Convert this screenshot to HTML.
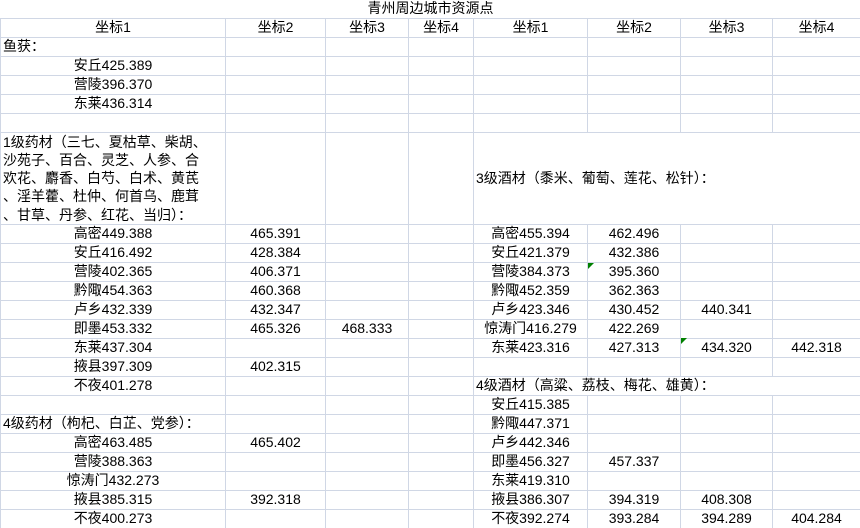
<!DOCTYPE html>
<html><head><meta charset="utf-8"><style>
html,body{margin:0;padding:0;background:#fff;width:860px;height:528px;overflow:hidden}
table{border-collapse:collapse;table-layout:fixed;width:860px;font-family:"Liberation Sans","Noto Sans CJK SC",sans-serif;font-size:14px;color:#000}
td{border:1px solid #d0d7e5;padding:0;line-height:17px;text-align:center;white-space:nowrap;overflow:hidden;vertical-align:middle}
tr{height:19px}
td.l{text-align:left;padding-left:2px}
.t td{border:none;border-bottom:1px solid #d0d7e5}
td.n{color:#000}
.tri{position:absolute;width:0;height:0;border-top:6px solid #008000;border-right:6px solid transparent}
</style></head><body>
<table>
<colgroup><col style="width:225px"><col style="width:100px"><col style="width:83px"><col style="width:65px"><col style="width:114px"><col style="width:93px"><col style="width:92px"><col style="width:88px"></colgroup>
<tr class="t" style="height:18px"><td colspan="8">青州周边城市资源点</td></tr>
<tr><td>坐标1</td><td>坐标2</td><td>坐标3</td><td>坐标4</td><td>坐标1</td><td>坐标2</td><td>坐标3</td><td>坐标4</td></tr>
<tr><td class="l">鱼获：</td><td></td><td></td><td></td><td></td><td></td><td></td><td></td></tr>
<tr><td>安丘425.389</td><td></td><td></td><td></td><td></td><td></td><td></td><td></td></tr>
<tr><td>营陵396.370</td><td></td><td></td><td></td><td></td><td></td><td></td><td></td></tr>
<tr><td>东莱436.314</td><td></td><td></td><td></td><td></td><td></td><td></td><td></td></tr>
<tr><td></td><td></td><td></td><td></td><td></td><td></td><td></td><td></td></tr>
<tr style="height:91px"><td class="l" style="line-height:18.3px">1级药材（三七、夏枯草、柴胡、<br>沙苑子、百合、灵芝、人参、合<br>欢花、麝香、白芍、白术、黄芪<br>、淫羊藿、杜仲、何首乌、鹿茸<br>、甘草、丹参、红花、当归）：</td><td></td><td></td><td></td><td colspan="4" class="l">3级酒材（黍米、葡萄、莲花、松针）：</td></tr>
<tr><td>高密449.388</td><td>465.391</td><td></td><td></td><td>高密455.394</td><td>462.496</td><td></td><td></td></tr>
<tr><td>安丘416.492</td><td>428.384</td><td></td><td></td><td>安丘421.379</td><td>432.386</td><td></td><td></td></tr>
<tr><td>营陵402.365</td><td>406.371</td><td></td><td></td><td>营陵384.373</td><td>395.360</td><td></td><td></td></tr>
<tr><td>黔陬454.363</td><td>460.368</td><td></td><td></td><td>黔陬452.359</td><td>362.363</td><td></td><td></td></tr>
<tr><td>卢乡432.339</td><td>432.347</td><td></td><td></td><td>卢乡423.346</td><td>430.452</td><td>440.341</td><td></td></tr>
<tr><td>即墨453.332</td><td>465.326</td><td>468.333</td><td></td><td>惊涛门416.279</td><td>422.269</td><td></td><td></td></tr>
<tr><td>东莱437.304</td><td></td><td></td><td></td><td>东莱423.316</td><td>427.313</td><td>434.320</td><td>442.318</td></tr>
<tr><td>掖县397.309</td><td>402.315</td><td></td><td></td><td></td><td></td><td></td><td></td></tr>
<tr><td>不夜401.278</td><td></td><td></td><td></td><td colspan="4" class="l">4级酒材（高粱、荔枝、梅花、雄黄）：</td></tr>
<tr><td></td><td></td><td></td><td></td><td>安丘415.385</td><td></td><td></td><td></td></tr>
<tr><td class="l">4级药材（枸杞、白芷、党参）：</td><td></td><td></td><td></td><td>黔陬447.371</td><td></td><td></td><td></td></tr>
<tr><td>高密463.485</td><td>465.402</td><td></td><td></td><td>卢乡442.346</td><td></td><td></td><td></td></tr>
<tr><td>营陵388.363</td><td></td><td></td><td></td><td>即墨456.327</td><td>457.337</td><td></td><td></td></tr>
<tr><td>惊涛门432.273</td><td></td><td></td><td></td><td>东莱419.310</td><td></td><td></td><td></td></tr>
<tr><td>掖县385.315</td><td>392.318</td><td></td><td></td><td>掖县386.307</td><td>394.319</td><td>408.308</td><td></td></tr>
<tr><td>不夜400.273</td><td></td><td></td><td></td><td>不夜392.274</td><td>393.284</td><td>394.289</td><td>404.284</td></tr>
</table>
<div class="tri" style="left:588px;top:263px"></div>
<div class="tri" style="left:681px;top:338px"></div>
</body></html>
